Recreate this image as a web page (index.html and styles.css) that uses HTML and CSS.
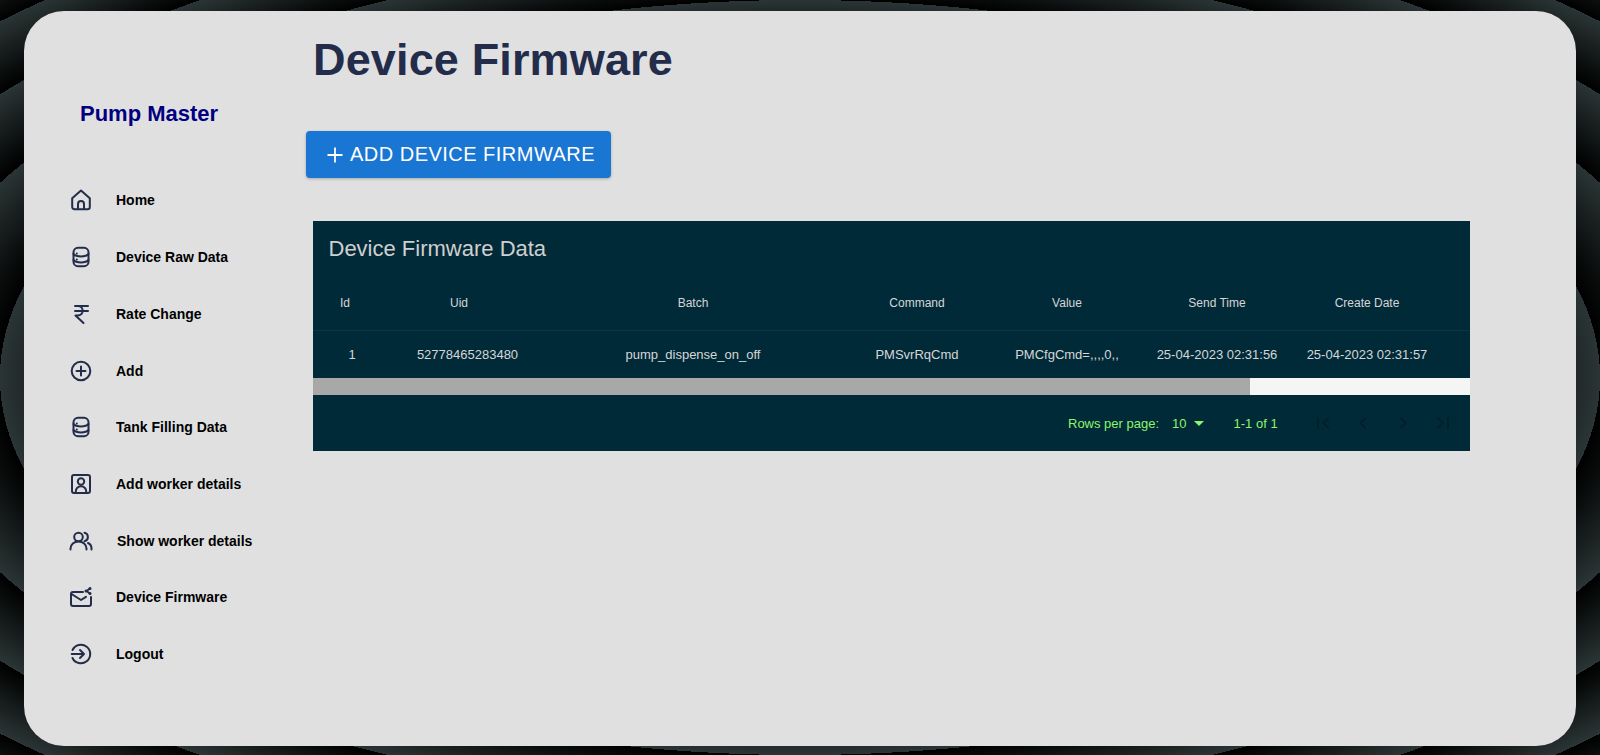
FILE: index.html
```html
<!DOCTYPE html>
<html lang="en">
<head>
    <meta charset="UTF-8">
    <meta name="viewport" content="width=device-width, initial-scale=1.0">
    <title>Device Firmware</title>
    <link rel="stylesheet" href="styles.css">
</head>
<body>
    <div class="card">
        <aside class="sidebar">
            <h2 class="brand">Pump Master</h2>
            <ul class="nav">
                <li>
                    <svg class="icon" viewBox="0 0 24 24"><path d="M3.200 10.200 12 2.500l8.800 7.700V19a2.200 2.200 0 0 1-2.200 2.200H5.400A2.200 2.200 0 0 1 3.200 19z"/><path d="M9 21v-5a3 3 0 0 1 6 0v5"/></svg>
                    <span>Home</span>
                </li>
                <li>
                    <svg class="icon" viewBox="0 0 24 24"><rect x="4.500" y="2.800" width="15" height="18.400" rx="4.500"/><path d="M4.500 9c1.500 1.800 4.500 2.400 7.500 2.400S18 10.800 19.500 9"/><path d="M4.500 15c1.500 1.800 4.500 2.400 7.500 2.400s6-.6 7.500-2.400"/><path d="M7.800 8.500h.01M7.800 14.500h.01"/></svg>
                    <span>Device Raw Data</span>
                </li>
                <li>
                    <svg class="icon" viewBox="0 0 24 24"><path d="M6 4h13M6 9h13M9 4c6 0 6.500 9.500-.5 9.500H6.500L14.500 21"/></svg>
                    <span>Rate Change</span>
                </li>
                <li>
                    <svg class="icon" viewBox="0 0 24 24"><circle cx="12" cy="12" r="9.300"/><path d="M12 7.500v9M7.500 12h9"/></svg>
                    <span>Add</span>
                </li>
                <li>
                    <svg class="icon" viewBox="0 0 24 24"><rect x="4.500" y="2.800" width="15" height="18.400" rx="4.500"/><path d="M4.500 9c1.500 1.800 4.500 2.400 7.500 2.400S18 10.800 19.500 9"/><path d="M4.500 15c1.500 1.800 4.500 2.400 7.500 2.400s6-.6 7.500-2.400"/><path d="M7.800 8.500h.01M7.800 14.500h.01"/></svg>
                    <span>Tank Filling Data</span>
                </li>
                <li>
                    <svg class="icon" viewBox="0 0 24 24"><rect x="3" y="3" width="18" height="18" rx="2"/><circle cx="12" cy="9.500" r="3.200"/><path d="M6.800 21v-1.500a5.200 5.200 0 0 1 10.400 0V21"/></svg>
                    <span>Add worker details</span>
                </li>
                <li>
                    <svg class="icon" viewBox="0 0 24 24"><circle cx="9.500" cy="8" r="4.300"/><path d="M1.500 20.500v-1a8 7 0 0 1 16 0v1"/><path d="M15.500 3.800a4.300 4.300 0 0 1 0 8.400M19 14c2.200 1 3.500 3 3.500 5.500v1"/></svg>
                    <span class="shift">Show worker details</span>
                </li>
                <li>
                    <svg class="icon" viewBox="0 0 24 24"><path d="M14 7H4a2 2 0 0 0-2 2v10a2 2 0 0 0 2 2h16a2 2 0 0 0 2-2v-7"/><path d="m2.500 9 9.500 6 5-3.200"/><path d="m17.500 6 3.500-2.500M17.500 6l3.500 2.500"/><circle class="dot" cx="21" cy="3.500" r="1.500"/><circle class="dot" cx="17" cy="6" r="1.500"/><circle class="dot" cx="21" cy="8.500" r="1.500"/></svg>
                    <span>Device Firmware</span>
                </li>
                <li>
                    <svg class="icon" viewBox="0 0 24 24"><path d="M3.500 8a9.300 9.300 0 1 1 0 8"/><path d="M2.700 12H15M11 8l4 4-4 4"/></svg>
                    <span>Logout</span>
                </li>
            </ul>
        </aside>

        <main class="content">
            <h1 class="page-title">Device Firmware</h1>
            <button class="add-btn">
                <svg viewBox="0 0 24 24"><path d="M12 4.500v15M4.500 12h15"/></svg>
                <span>Add Device Firmware</span>
            </button>

            <section class="panel">
                <h3 class="panel-title">Device Firmware Data</h3>
                <table class="grid">
                    <colgroup>
                        <col class="c-id"><col class="c-uid"><col class="c-batch"><col class="c-cmd">
                        <col class="c-val"><col class="c-send"><col class="c-create"><col class="c-rest">
                    </colgroup>
                    <thead>
                        <tr>
                            <th>Id</th><th>Uid</th><th>Batch</th><th>Command</th>
                            <th>Value</th><th>Send Time</th><th>Create Date</th><th></th>
                        </tr>
                    </thead>
                    <tbody>
                        <tr>
                            <td class="td-id">1</td>
                            <td class="td-uid">52778465283480</td>
                            <td>pump_dispense_on_off</td>
                            <td>PMSvrRqCmd</td>
                            <td>PMCfgCmd=,,,,0,,</td>
                            <td>25-04-2023 02:31:56</td>
                            <td>25-04-2023 02:31:57</td>
                            <td></td>
                        </tr>
                    </tbody>
                </table>
                <div class="scroll-track"><div class="scroll-thumb"></div></div>
                <div class="pager">
                    <span>Rows per page:</span>
                    <span class="rows">10</span>
                    <svg class="caret" viewBox="0 0 24 24"><path d="M7 10l5 5 5-5z"/></svg>
                    <span class="range">1-1 of 1</span>
                    <div class="pager-btns">
                        <svg viewBox="0 0 24 24"><path d="M18.410 16.590 13.820 12l4.590-4.590L17 6l-6 6 6 6zM6 6h2v12H6z"/></svg>
                        <svg viewBox="0 0 24 24"><path d="M15.410 7.410 14 6l-6 6 6 6 1.410-1.410L10.830 12z"/></svg>
                        <svg viewBox="0 0 24 24"><path d="M10 6 8.590 7.410 13.170 12l-4.580 4.590L10 18l6-6z"/></svg>
                        <svg viewBox="0 0 24 24"><path d="M5.590 7.410 10.180 12l-4.590 4.590L7 18l6-6-6-6zM16 6h2v12h-2z"/></svg>
                    </div>
                </div>
            </section>
        </main>
    </div>
</body>
</html>
```

FILE: styles.css
```css
*{
    margin: 0;
    padding: 0;
    box-sizing: border-box;
}
html,body{
    height: 100%;
}
body{
    font-family: "Liberation Sans", Arial, sans-serif;
    background: repeating-radial-gradient(ellipse 800px 377.5px at center, #000 0, #2b3535 12.5%);
    padding: 11px 24px 9px;
    overflow: hidden;
}
.card{
    height: 735px;
    background: #e0e0e0;
    border-radius: 40px;
    display: flex;
}

/* sidebar */
.sidebar{
    width: 282px;
    flex-shrink: 0;
    padding: 90px 0 0 45px;
}
.brand{
    font-size: 22px;
    line-height: 26px;
    color: #000080;
    margin-left: 11px;
}
.nav{
    list-style: none;
    margin-top: 45px;
}
.nav > li{
    display: flex;
    align-items: center;
    height: 56.73px;
    font-size: 14px;
    font-weight: bold;
    color: #000;
}
.icon{
    width: 24px;
    height: 24px;
    margin-right: 23px;
    fill: none;
    stroke: #232d4b;
    stroke-width: 2;
    stroke-linecap: round;
    stroke-linejoin: round;
}
.icon .dot{
    fill: #232d4b;
    stroke: none;
}
.shift{
    margin-left: 1px;
}

/* main area */
.content{
    flex: 1;
    min-width: 0;
    padding-right: 106px;
}
.page-title{
    font-size: 45px;
    line-height: 52px;
    letter-spacing: 0.15px;
    color: #232d4b;
    margin: 23px 0 0 7px;
}
.add-btn{
    display: flex;
    align-items: center;
    height: 47px;
    margin-top: 45px;
    padding: 0 16px 0 17px;
    border: 0;
    border-radius: 4px;
    background: #1976d2;
    color: #fff;
    font-family: inherit;
    font-size: 20px;
    letter-spacing: 0.48px;
    text-transform: uppercase;
    box-shadow: 0 1px 3px rgba(0, 0, 0, 0.25);
}
.add-btn svg{
    width: 24px;
    height: 24px;
    margin-right: 3px;
    fill: none;
    stroke: #fff;
    stroke-width: 1.8;
}

/* table panel */
.panel{
    margin: 43px 0 0 7px;
    background: #012a39;
    overflow: hidden;
}
.panel-title{
    font-size: 22px;
    font-weight: normal;
    line-height: 26px;
    color: #cfcfcf;
    padding: 15px 15.5px 0;
}
.grid{
    table-layout: fixed;
    width: 1428px;
    border-collapse: collapse;
    color: #d6d6d6;
    margin-top: 15px;
}
.c-id{ width: 64px; }
.c-uid{ width: 164px; }
.c-batch{ width: 304px; }
.c-cmd{ width: 144px; }
.c-val{ width: 156px; }
.c-send{ width: 144px; }
.c-create{ width: 156px; }
.c-rest{ width: 296px; }
.grid th{
    height: 53px;
    font-size: 12px;
    font-weight: normal;
    text-align: center;
    border-bottom: 1px solid #0c3644;
}
.grid td{
    height: 48px;
    font-size: 13px;
    text-align: center;
}
.grid .td-id{
    padding-left: 14px;
}
.grid .td-uid{
    padding-left: 17px;
}
.scroll-track{
    height: 17px;
    background: #f5f5f5;
}
.scroll-thumb{
    width: 937px;
    height: 100%;
    background: #a8a8a8;
}
.pager{
    display: flex;
    align-items: center;
    height: 56px;
    padding-left: 755px;
    font-size: 13px;
    color: #8cf56a;
}
.rows{
    margin-left: 13px;
}
.caret{
    width: 24px;
    height: 24px;
    fill: #8cf56a;
}
.range{
    margin-left: 23px;
}
.pager-btns{
    display: flex;
    gap: 16px;
    margin-left: 33px;
}
.pager-btns svg{
    width: 24px;
    height: 24px;
    fill: rgba(0, 0, 0, 0.26);
}
```
